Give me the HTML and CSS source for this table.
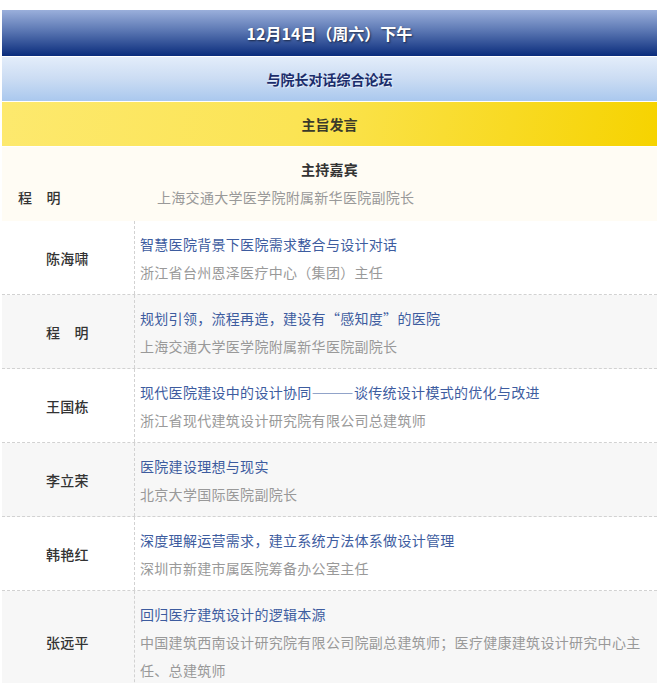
FILE: index.html
```html
<!DOCTYPE html>
<html lang="zh-CN">
<head>
<meta charset="utf-8">
<title>与院长对话综合论坛</title>
<link rel="stylesheet" href="styles.css">
</head>
<body>
<div class="schedule">
  <div class="bar bar-date">12月14日（周六）下午</div>
  <div class="bar bar-forum">与院长对话综合论坛</div>
  <div class="bar bar-session">主旨发言</div>
  <div class="host">
    <div class="host-label">主持嘉宾</div>
    <div class="host-row">
      <span class="host-name">程　明</span>
      <span class="host-desc">上海交通大学医学院附属新华医院副院长</span>
    </div>
  </div>
  <div class="talk">
    <div class="talk-name">陈海啸</div>
    <div class="talk-body">
      <div class="talk-title">智慧医院背景下医院需求整合与设计对话</div>
      <div class="talk-org">浙江省台州恩泽医疗中心（集团）主任</div>
    </div>
  </div>
  <div class="talk talk-alt">
    <div class="talk-name">程　明</div>
    <div class="talk-body">
      <div class="talk-title">规划引领，流程再造，建设有“感知度”的医院</div>
      <div class="talk-org">上海交通大学医学院附属新华医院副院长</div>
    </div>
  </div>
  <div class="talk">
    <div class="talk-name">王国栋</div>
    <div class="talk-body">
      <div class="talk-title">现代医院建设中的设计协同———谈传统设计模式的优化与改进</div>
      <div class="talk-org">浙江省现代建筑设计研究院有限公司总建筑师</div>
    </div>
  </div>
  <div class="talk talk-alt">
    <div class="talk-name">李立荣</div>
    <div class="talk-body">
      <div class="talk-title">医院建设理想与现实</div>
      <div class="talk-org">北京大学国际医院副院长</div>
    </div>
  </div>
  <div class="talk">
    <div class="talk-name">韩艳红</div>
    <div class="talk-body">
      <div class="talk-title">深度理解运营需求，建立系统方法体系做设计管理</div>
      <div class="talk-org">深圳市新建市属医院筹备办公室主任</div>
    </div>
  </div>
  <div class="talk talk-alt">
    <div class="talk-name">张远平</div>
    <div class="talk-body">
      <div class="talk-title">回归医疗建筑设计的逻辑本源</div>
      <div class="talk-org">中国建筑西南设计研究院有限公司院副总建筑师；医疗健康建筑设计研究中心主任、总建筑师</div>
    </div>
  </div>
</div>
</body>
</html>
```

FILE: styles.css
```css
html, body {
  margin: 0;
  padding: 0;
  background: #ffffff;
}

body {
  font-family: "Noto Sans CJK SC", "Noto Sans", sans-serif;
  font-size: 14px;
  color: #333333;
}

.schedule {
  width: 655px;
  margin: 10px 0 0 2px;
  display: flex;
  flex-direction: column;
}

.bar {
  display: flex;
  align-items: center;
  justify-content: center;
  font-weight: bold;
  margin-bottom: 1px;
}

.bar-date {
  height: 46px;
  font-size: 16px;
  color: #ffffff;
  background: linear-gradient(to bottom, #9aafdb 0%, #5b77b3 45%, #0a2c7c 100%);
  text-shadow: 1px 1px 2px rgba(0, 0, 0, 0.55);
}

.bar-forum {
  height: 44px;
  font-size: 14px;
  color: #1b2d6b;
  background: linear-gradient(to bottom, #e3edfa 0%, #cbdcf3 50%, #aac8ee 100%);
  text-shadow: 1px 1px 1px rgba(255, 255, 255, 0.7);
}

.bar-session {
  height: 44px;
  font-size: 14px;
  color: #3a3a2a;
  background: linear-gradient(100deg, #fde96e 0%, #fbe454 45%, #f6d300 100%);
}

.host {
  background: #fffcf4;
  padding: 8px 0 10px;
  line-height: 28px;
  letter-spacing: 0.3px;
}

.host-label {
  text-align: center;
  font-weight: bold;
  color: #333333;
}

.host-row {
  display: flex;
}

.host-name {
  width: 139px;
  padding-left: 16px;
  font-weight: 500;
  color: #333333;
}

.host-desc {
  color: #999999;
}

.talk {
  display: grid;
  grid-template-columns: 133px 1fr;
  border-bottom: 1px dashed #d2d2d2;
  background: #ffffff;
  letter-spacing: 0.3px;
}

.talk-alt {
  background: #f7f7f7;
}

.talk-name {
  display: flex;
  align-items: center;
  padding-left: 44px;
  border-right: 1px dashed #d2d2d2;
  font-weight: 500;
  color: #333333;
}

.talk-body {
  padding: 9px 0 8px 5px;
  line-height: 28px;
}

.talk-title {
  color: #3d5c9f;
}

.talk-org {
  color: #999999;
}
```
